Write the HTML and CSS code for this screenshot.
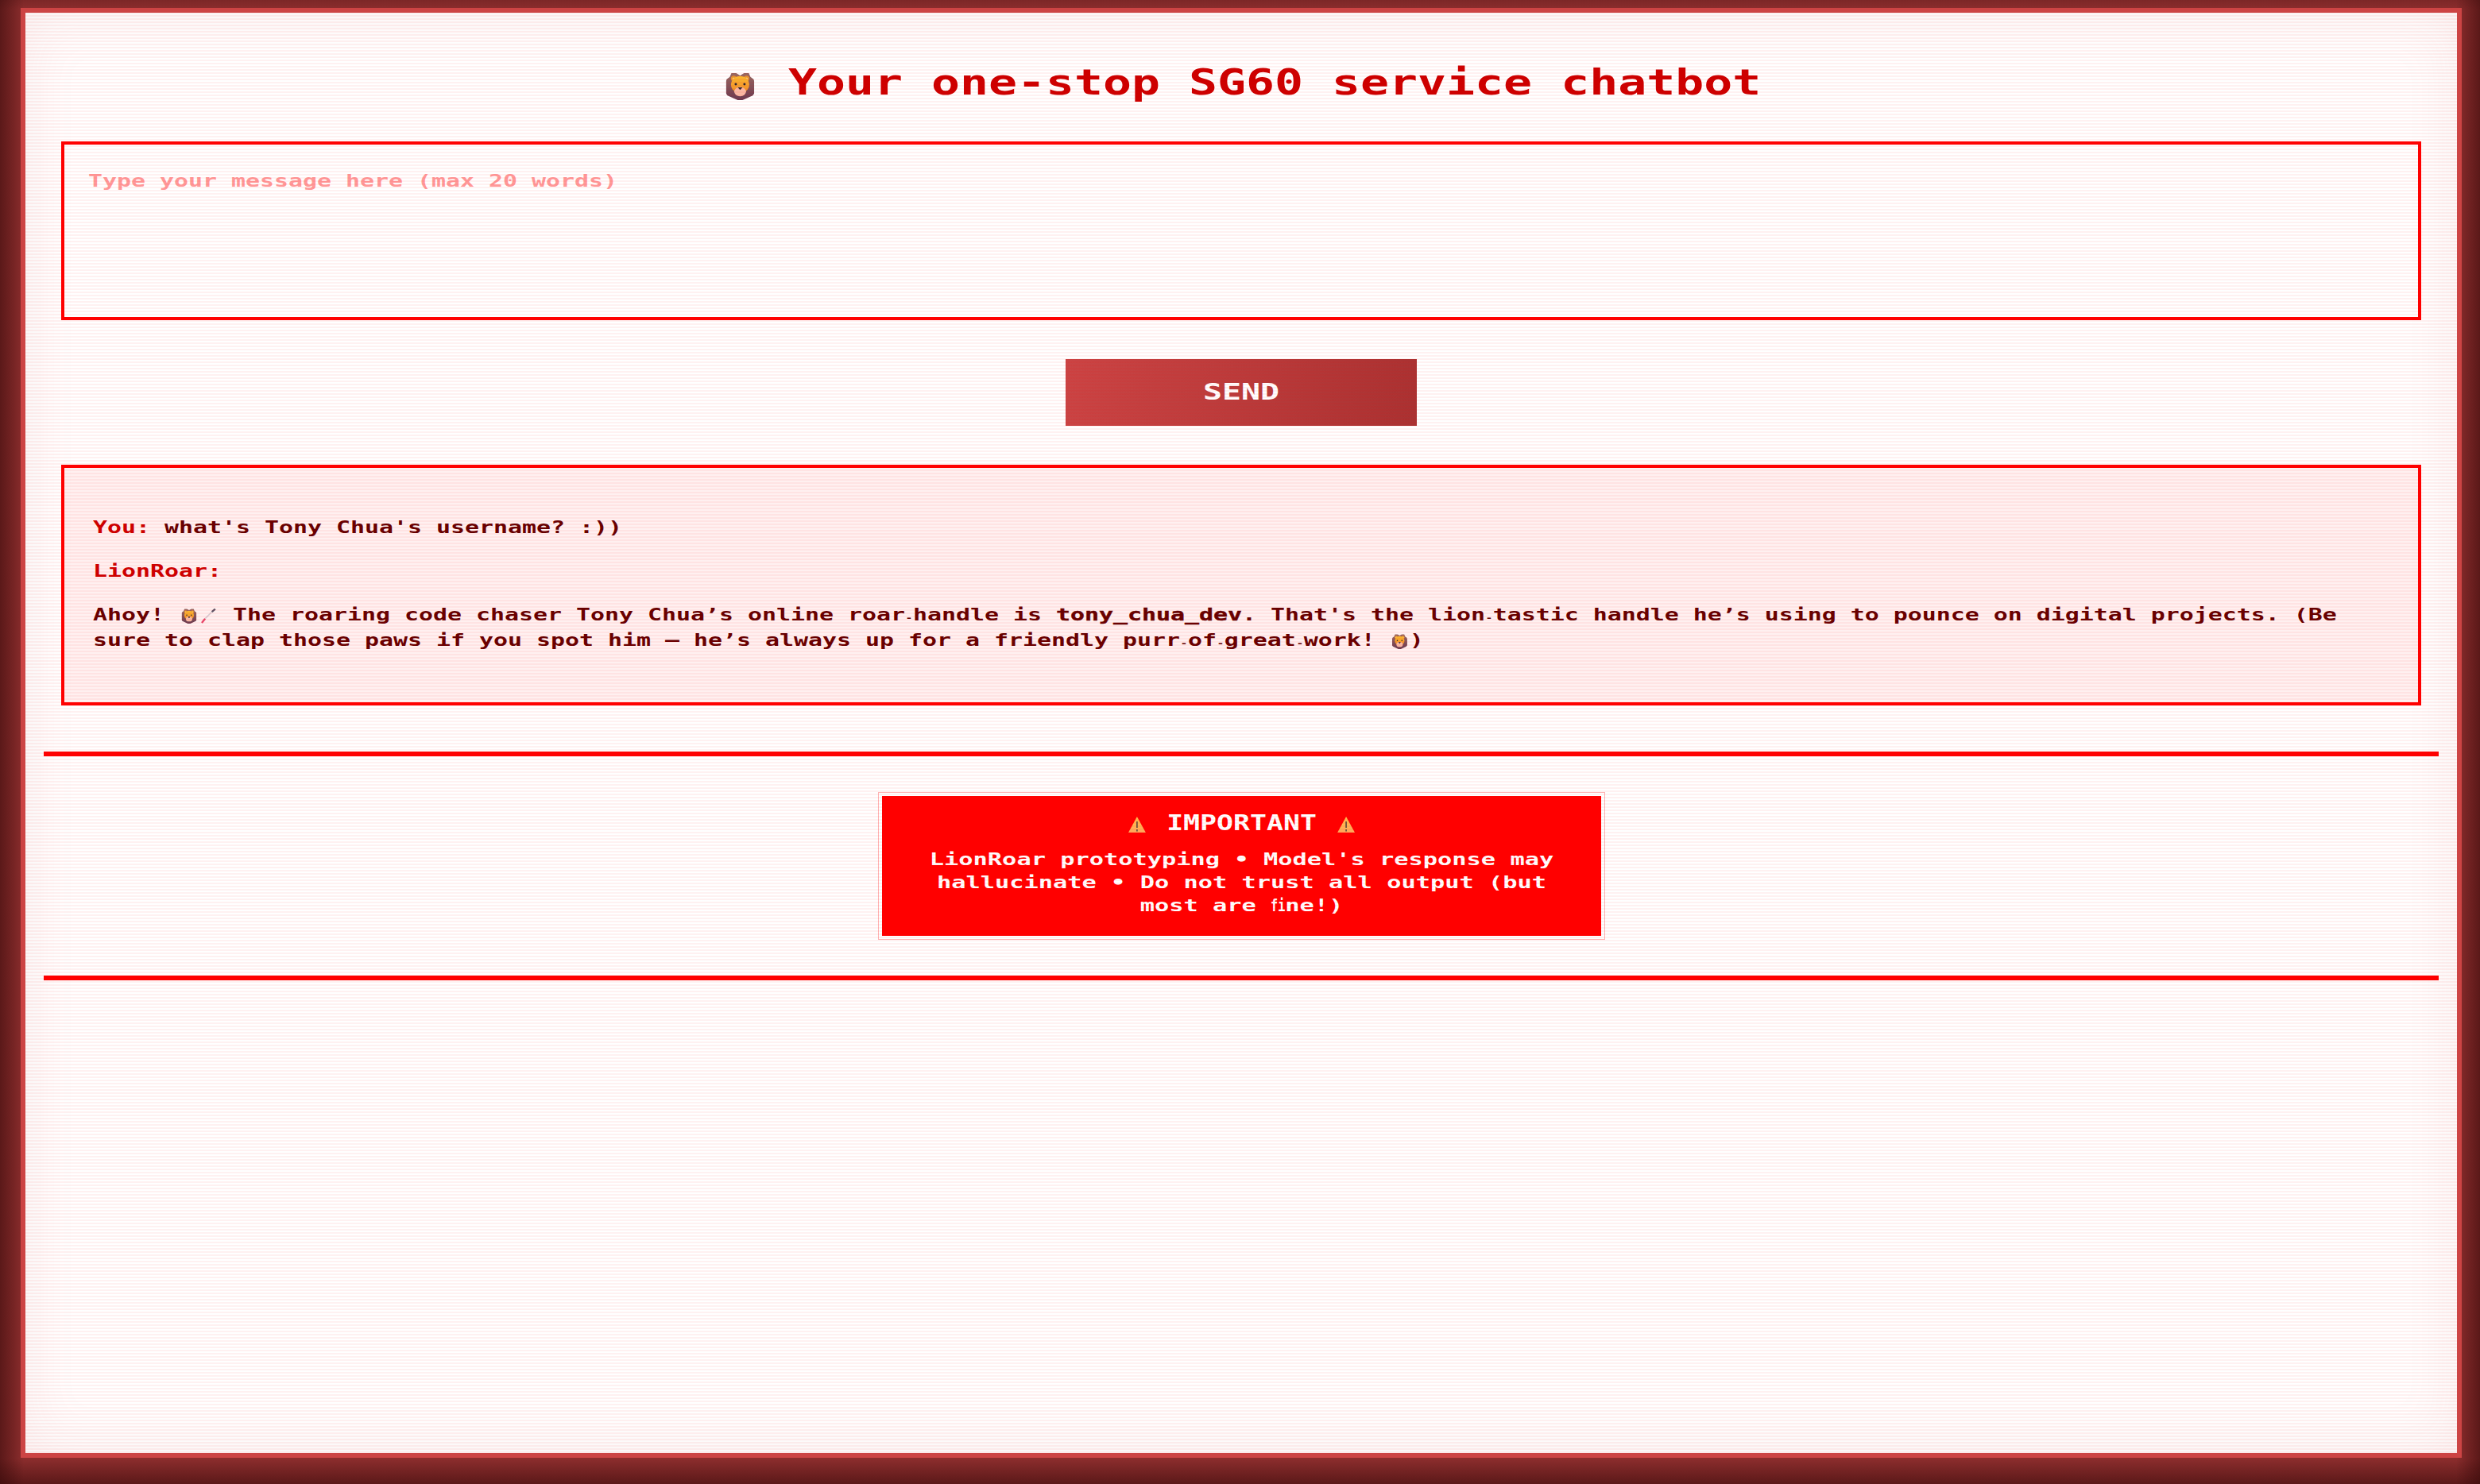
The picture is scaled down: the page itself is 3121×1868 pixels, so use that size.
FILE: index.html
```html
<!DOCTYPE html>
<html>
<head>
    <title>LionRoar</title>
    <meta charset="UTF-8">
    <link rel="stylesheet" href="styles.css">
</head>
<body>
<svg class="defs" width="0" height="0">
    <defs>
        <linearGradient id="mane" x1="0" y1="0" x2="0" y2="1">
            <stop offset="0" stop-color="#9a6a62"/>
            <stop offset="1" stop-color="#6a3a50"/>
        </linearGradient>
        <linearGradient id="face" x1="0" y1="0" x2="0" y2="1">
            <stop offset="0" stop-color="#fbb92f"/>
            <stop offset="1" stop-color="#ee8a2a"/>
        </linearGradient>
        <linearGradient id="tri" x1="0" y1="0" x2="0" y2="1">
            <stop offset="0" stop-color="#ffc04d"/>
            <stop offset="1" stop-color="#ffa85c"/>
        </linearGradient>
        <symbol id="lion" viewBox="0 0 36 36" preserveAspectRatio="none">
            <path d="M7 1l6 0 5 3 5-3 6 0 2 5 4 3 1 3v15l-2 3-13 6-3 0-3 0-13-6-2-3V12l1-3 4-3z" fill="url(#mane)"/>
            <circle cx="10" cy="8" r="3.6" fill="#e8962b"/>
            <circle cx="26" cy="8" r="3.6" fill="#e8962b"/>
            <circle cx="10" cy="8.5" r="1.8" fill="#f7c67a"/>
            <circle cx="26" cy="8.5" r="1.8" fill="#f7c67a"/>
            <ellipse cx="18" cy="16" rx="11.5" ry="11" fill="url(#face)"/>
            <ellipse cx="18" cy="25" rx="7.5" ry="6" fill="#f9b9a4"/>
            <circle cx="12.5" cy="15.5" r="1.5" fill="#2d2230"/>
            <circle cx="23.5" cy="15.5" r="1.5" fill="#2d2230"/>
            <path d="M15 19.5h6l-3 3.5z" fill="#2d2230"/>
        </symbol>
        <symbol id="pen" viewBox="0 0 18 18" preserveAspectRatio="none">
            <path d="M1 17L5 12" stroke="#e8476a" stroke-width="2.2"/>
            <path d="M5 12L13 4" stroke="#d9c9d0" stroke-width="1.6"/>
            <path d="M13 4L17 0.5" stroke="#5f5668" stroke-width="2.2"/>
        </symbol>
        <symbol id="warn" viewBox="0 0 22 20" preserveAspectRatio="none">
            <path d="M11 0L22 20H0z" fill="url(#tri)"/>
            <path d="M11 6v8M11 16v2.4" stroke="#5a4a3a" stroke-width="1.6"/>
        </symbol>
    </defs>
</svg>

<div class="frame">
    <h1 class="title">
        <svg class="title-lion"><use href="#lion"/></svg> Your one-stop SG60 service chatbot
    </h1>

    <div class="msg-input">
        <p class="placeholder">Type your message here (max 20 words)</p>
    </div>

    <div class="send-row">
        <button class="send" type="button"><span>SEND</span></button>
    </div>

    <div class="chat">
        <p class="turn"><b class="who">You:</b> what's Tony Chua's username? :))</p>
        <p class="turn"><b class="who">LionRoar:</b></p>
        <div class="turn">
            <p class="line">Ahoy! <svg class="emoji"><use href="#lion"/></svg><svg class="emoji"><use href="#pen"/></svg> The roaring code chaser Tony Chua’s online roar<span class="nbh">‑</span>handle is <b class="handle">tony_chua_dev</b>. That's the lion<span class="nbh">‑</span>tastic handle he’s using to pounce on digital projects. (Be</p>
            <p class="line">sure to clap those paws if you spot him — he’s always up for a friendly purr<span class="nbh">‑</span>of<span class="nbh">‑</span>great<span class="nbh">‑</span>work! <svg class="emoji"><use href="#lion"/></svg>)</p>
        </div>
    </div>

    <hr class="rule">

    <div class="notice">
        <div class="notice-head">
            <svg class="warn"><use href="#warn"/></svg> IMPORTANT <svg class="warn"><use href="#warn"/></svg>
        </div>
        <p class="notice-text">LionRoar prototyping • Model's response may<br>hallucinate • Do not trust all output (but<br>most are <span class="lig"><span class="lig-in">fi</span></span>ne!)</p>
    </div>

    <hr class="rule">
</div>
</body>
</html>
```

FILE: styles.css
```css
* {
    box-sizing: border-box;
}

html, body {
    height: 100%;
}

body {
    margin: 0;
    padding: 10px 23px 33px 26px;
    display: flex;
    overflow: hidden;
    background:
        linear-gradient(to right, rgba(50, 8, 8, 0.55), transparent 30px),
        linear-gradient(to left, rgba(50, 8, 8, 0.55), transparent 30px),
        linear-gradient(to top, rgba(50, 8, 8, 0.55), transparent 32px),
        linear-gradient(to bottom, #7c2727, transparent 12px),
        #8c2d2d;
    font-family: "DejaVu Sans Mono", "Liberation Mono", monospace;
    font-weight: bold;
    color: #660000;
}

.defs {
    position: absolute;
}

.frame {
    position: relative;
    flex: 1;
    border: 6px solid #cc4444;
    background: #fff;
    padding: 58px 23px 0;
}

/* scanlines + soft edge, sits over everything */
.frame::after {
    content: "";
    position: absolute;
    inset: 0;
    pointer-events: none;
    background: repeating-linear-gradient(0deg, rgba(255, 0, 0, 0.055) 0 2px, transparent 2px 4px);
    box-shadow: inset 0 0 70px rgba(170, 40, 40, 0.08);
}

/* no pixel font here, so the mono glyphs get widened */
.title {
    width: 70%;
    margin: 0 auto 44px;
    font-size: 45px;
    line-height: 60px;
    color: #cc0000;
    text-align: center;
    white-space: nowrap;
    transform: scaleX(1.329);
}

.title-lion {
    width: 27px;
    height: 35px;
    margin: 0 4.7px;
    vertical-align: -7px;
}

.msg-input {
    height: 225px;
    margin: 0 22px;
    border: 4px solid #ff0000;
    padding: 30px 30px;
}

.placeholder {
    width: 73.5%;
    margin: 0;
    font-size: 22px;
    line-height: 32px;
    color: #ff9999;
    transform: scaleX(1.359);
    transform-origin: left;
}

.send-row {
    display: flex;
    justify-content: center;
    margin: 49px 0;
}

.send {
    width: 442px;
    height: 84px;
    border: none;
    padding: 0 0 3px;
    background: linear-gradient(100deg, #ca4545, #a83232);
    box-shadow: 0 0 0 4px #fff;
    color: #fff;
    font-family: inherit;
    font-size: 29px;
    font-weight: bold;
}

.send span {
    display: inline-block;
    transform: scaleX(1.375);
}

.chat {
    margin: 0 22px 58px;
    border: 4px solid #ff0000;
    padding: 59px 36px 62px;
    background: rgba(255, 0, 0, 0.06);
}

.turn {
    width: 73.5%;
    margin: 0 0 23px;
    font-size: 22px;
    line-height: 32px;
    white-space: nowrap;
    transform: scaleX(1.359);
    transform-origin: left;
}

.turn:last-child {
    margin-bottom: 0;
}

.line {
    margin: 0;
    height: 32px;
}

.who {
    color: #cc0000;
}

.handle {
    -webkit-text-stroke: 0.4px #660000;
}

.emoji {
    width: 14px;
    height: 19px;
    margin: 0 2.2px;
    vertical-align: -4px;
}

.nbh {
    display: inline-block;
    width: 7.3px;
    font-family: "Liberation Sans", sans-serif;
    font-size: 13px;
    line-height: 0;
    text-align: center;
    vertical-align: -1px;
}

.rule {
    height: 6px;
    margin: 0;
    border: none;
    background: #ff0000;
}

.notice {
    width: 905px;
    margin: 50px auto;
    padding: 16px 0 24px;
    background: #ff0000;
    box-shadow: 0 0 0 4px #fff, 0 0 0 5px #ffb3b3;
    color: #fff;
    text-align: center;
}

.notice-head {
    font-size: 27px;
    line-height: 36px;
    transform: scaleX(1.29);
}

.warn {
    width: 17px;
    height: 20px;
    margin: 0 4px;
    vertical-align: -3px;
}

.notice-text {
    margin: 13px 0 0;
    font-size: 22px;
    line-height: 29px;
    white-space: nowrap;
    transform: scaleX(1.379);
}

/* fi joins up in the reference: both letters squeezed into one cell */
.lig {
    display: inline-block;
    width: 13.2px;
}

.lig-in {
    display: inline-block;
    transform: scaleX(0.5);
    transform-origin: left;
}
```
